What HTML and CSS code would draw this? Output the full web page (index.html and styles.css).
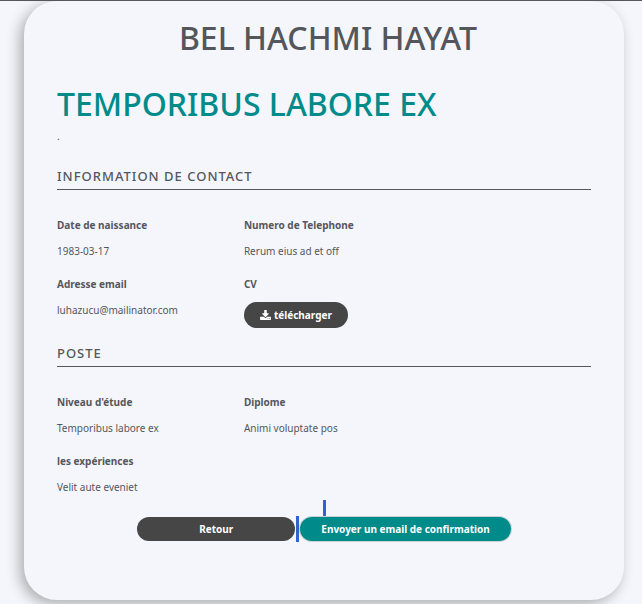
FILE: index.html
```html
<!DOCTYPE html>
<html lang="fr">
<head>
<meta charset="utf-8">
<meta name="viewport" content="width=device-width, initial-scale=1">
<title>Bel Hachmi Hayat</title>
<link rel="stylesheet" href="styles.css">
</head>
<body>
<main class="card">
  <h1 class="name">BEL HACHMI HAYAT</h1>
  <h2 class="job">TEMPORIBUS LABORE EX</h2>
  <p class="summary">.</p>

  <section class="section">
    <h3 class="section-title">INFORMATION DE CONTACT</h3>
    <dl class="fields">
      <div class="field"><dt>Date de naissance</dt><dd>1983-03-17</dd></div>
      <div class="field"><dt>Numero de Telephone</dt><dd>Rerum eius ad et off</dd></div>
      <div class="field"><dt>Adresse email</dt><dd>luhazucu@mailinator.com</dd></div>
      <div class="field"><dt>CV</dt><dd class="file">
        <button type="button" class="btn btn-dark btn-download">
          <svg class="icon" viewBox="0 0 1664 1536" aria-hidden="true"><path fill="currentColor" d="M1280 1216q0-26-19-45t-45-19-45 19-19 45 19 45 45 19 45-19 19-45zm256 0q0-26-19-45t-45-19-45 19-19 45 19 45 45 19 45-19 19-45zm128-224v320q0 40-28 68t-68 28H96q-40 0-68-28t-28-68V992q0-40 28-68t68-28h465l135 136q58 56 136 56t136-56l136-136h464q40 0 68 28t28 68zm-325-569q17 41-14 70l-448 448q-18 19-45 19t-45-19L339 493q-31-29-14-70 17-39 59-39h256V-64q0-26 19-45t45-19h256q26 0 45 19t19 45v448h256q42 0 59 39z" transform="translate(0 128)"/></svg>
          télécharger
        </button></dd></div>
    </dl>
  </section>

  <section class="section">
    <h3 class="section-title">POSTE</h3>
    <dl class="fields">
      <div class="field"><dt>Niveau d'étude</dt><dd>Temporibus labore ex</dd></div>
      <div class="field"><dt>Diplome</dt><dd>Animi voluptate pos</dd></div>
      <div class="field"><dt>les expériences</dt><dd>Velit aute eveniet</dd></div>
    </dl>
  </section>

  <div class="marker"></div>
  <div class="actions">
    <button type="button" class="btn btn-dark btn-back">Retour</button>
    <span class="divider"></span>
    <button type="button" class="btn btn-teal">Envoyer un email de confirmation</button>
  </div>
</main>
</body>
</html>
```
FILE: styles.css
```css
* {
  box-sizing: border-box;
}

body {
  margin: 0;
  border-top: 1px solid #55565b;
  background: #f4f6fb;
  color: #55565b;
  font-family: "Noto Sans", "Open Sans", sans-serif;
  font-size: 10px;
  line-height: 16px;
}

h1, h2, h3, p, dl, dd {
  margin: 0;
}

.card {
  margin: 0 18px 4px 24px;
  padding: 13px 33px 58px;
  border-radius: 33px;
  background: #f4f6fb;
  box-shadow: -4px 4px 14px rgba(0, 0, 0, 0.3);
}

.name,
.job {
  font-size: 32px;
  font-weight: 500;
  line-height: 48px;
}

.name {
  padding-left: 8px;
  text-align: center;
}

.job {
  margin-top: 18px;
  color: #008b8b;
}

.section-title {
  padding-bottom: 4px;
  border-bottom: 1px solid #55565b;
  font-size: 13px;
  font-weight: 500;
  line-height: 18px;
  letter-spacing: 1px;
}

.section {
  margin-top: 23px;
}

.section + .section {
  margin-top: 16px;
}

.fields {
  display: grid;
  grid-template-columns: 35% 65%;
  row-gap: 17px;
  padding-top: 27px;
}

.field dt {
  font-weight: 700;
}

.field dd {
  margin-top: 10px;
}

.field .file {
  display: flex;
}

.btn {
  padding: 0 21px;
  border: 0;
  border-radius: 13px;
  color: #fff;
  font: 700 10px/24px "Noto Sans", "Open Sans", sans-serif;
}

.btn-dark {
  background: #464646;
}

.btn-teal {
  background: #008b8b;
  box-shadow: 0 0 0 1px #c9d3d6;
}

.btn-download {
  display: flex;
  align-items: center;
  gap: 3px;
  padding: 0 16px;
  line-height: 26px;
}

.icon {
  width: 11px;
  height: 10px;
}

.marker {
  width: 3px;
  height: 16px;
  margin: 5px auto 0;
  background: #2f63d0;
}

.actions {
  display: flex;
  justify-content: center;
  align-items: center;
  gap: 1px;
}

.btn-back {
  width: 158px;
}

.divider {
  width: 3px;
  height: 26px;
  background: #2f63d0;
}
```
